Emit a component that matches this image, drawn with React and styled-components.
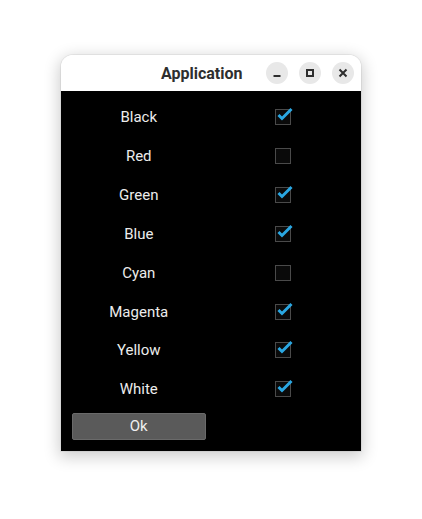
import React, { useState } from "react";
import styled, { createGlobalStyle } from "styled-components";

const Global = createGlobalStyle`
  html, body { margin: 0; padding: 0; background: #ffffff; }
  body { font-family: Roboto, "Noto Sans", sans-serif; }
`;

const Page = styled.div`
  width: 422px;
  height: 519px;
  padding: 55px 0 0 61px;
  box-sizing: border-box;
`;

const Window = styled.div`
  width: 300px;
  border-radius: 12px 12px 0 0;
  overflow: hidden;
  box-shadow: 0 4px 16px 2px rgba(0,0,0,0.2), 0 0 0 1px rgba(0,0,0,0.05);
`;

const TitleBar = styled.div`
  height: 36px;
  background: #ffffff;
  display: flex;
  align-items: center;
  padding: 0 7px 0 0;
  box-sizing: border-box;
`;

const Title = styled.div`
  flex: 1;
  font-family: Roboto, "Noto Sans", sans-serif;
  font-weight: 700;
  font-size: 16px;
  color: #2e2e2e;
  padding-left: 100px;
  margin-top: 1px;
`;

const Controls = styled.div`
  display: flex;
  gap: 11px;
`;

const CtrlButton = styled.div`
  width: 22px;
  height: 22px;
  border-radius: 50%;
  background: #e8e8e8;
  display: flex;
  align-items: center;
  justify-content: center;
`;

const Content = styled.div`
  background: #000000;
  padding: 7px 11px 11px;
  display: grid;
  grid-template-columns: 1fr 1fr;
  column-gap: 11px;
`;

const Label = styled.div`
  height: 38.85px;
  display: flex;
  align-items: center;
  justify-content: center;
  color: #ececec;
  font-size: 15px;
  font-family: Roboto, "Noto Sans", sans-serif;
`;

const CheckCell = styled.div`
  height: 38.85px;
  display: flex;
  align-items: center;
  justify-content: center;
  cursor: pointer;
`;

const Box = styled.div`
  position: relative;
  width: 16px;
  height: 16px;
  box-sizing: border-box;
  border: 1px solid #4a4a4a;
  background: #0a0a0a;
`;

const CheckMark = styled.svg`
  position: absolute;
  left: 1px;
  top: -4px;
  overflow: visible;
`;

const OkButton = styled.button`
  margin-top: 4px;
  height: 27px;
  background: #5a5a5a;
  border: 1px solid #6a6a6a;
  border-radius: 2px;
  color: #f0f0f0;
  font-size: 15px;
  font-family: Roboto, "Noto Sans", sans-serif;
  padding: 0;
`;

const colors = [
  ["Black", true],
  ["Red", false],
  ["Green", true],
  ["Blue", true],
  ["Cyan", false],
  ["Magenta", true],
  ["Yellow", true],
  ["White", true],
];

function Check({ checked, onToggle }) {
  return (
    <CheckCell onClick={onToggle}>
      <Box>
        {checked && (
          <CheckMark width="16" height="16" viewBox="0 0 16 16">
            <path d="M1.5 9 L5 12.5 L14.5 3" fill="none" stroke="#2aa7e2" strokeWidth="3" strokeLinecap="butt" strokeLinejoin="miter" />
          </CheckMark>
        )}
      </Box>
    </CheckCell>
  );
}

export default function App() {
  const [state, setState] = useState(colors.map((c) => c[1]));
  return (
    <>
      <Global />
      <Page>
        <Window>
          <TitleBar>
            <Title>Application</Title>
            <Controls>
              <CtrlButton>
                <svg width="10" height="10" viewBox="0 0 10 10"><rect x="1.5" y="7" width="7" height="2" fill="#2e2e2e" /></svg>
              </CtrlButton>
              <CtrlButton>
                <svg width="10" height="10" viewBox="0 0 10 10"><rect x="2" y="2" width="6" height="6" fill="none" stroke="#2e2e2e" strokeWidth="2" /></svg>
              </CtrlButton>
              <CtrlButton>
                <svg width="10" height="10" viewBox="0 0 10 10"><path d="M1.5 1.5 L8.5 8.5 M8.5 1.5 L1.5 8.5" stroke="#2e2e2e" strokeWidth="2" /></svg>
              </CtrlButton>
            </Controls>
          </TitleBar>
          <Content>
            {colors.map(([name], i) => (
              <React.Fragment key={name}>
                <Label>{name}</Label>
                <Check
                  checked={state[i]}
                  onToggle={() => setState((s) => s.map((v, j) => (j === i ? !v : v)))}
                />
              </React.Fragment>
            ))}
            <OkButton>Ok</OkButton>
          </Content>
        </Window>
      </Page>
    </>
  );
}
